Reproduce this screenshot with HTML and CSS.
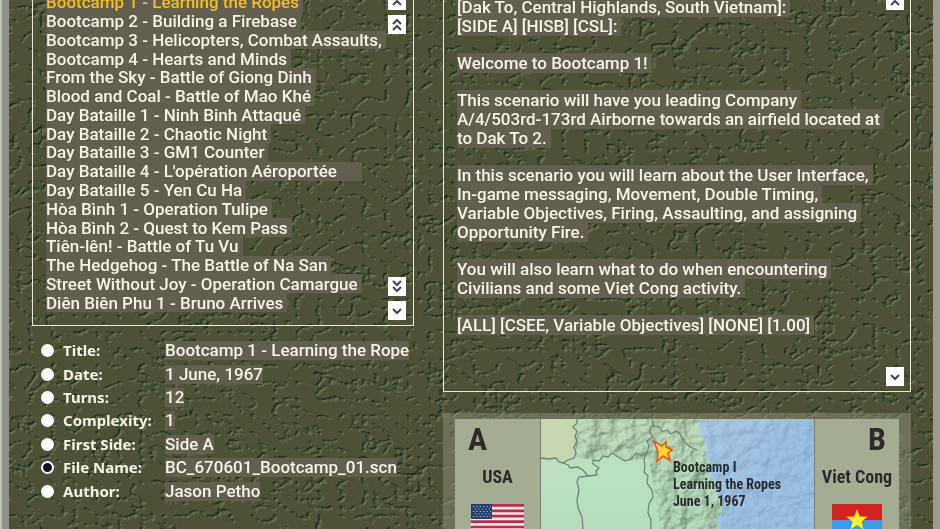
FILE: index.html
```html
<!DOCTYPE html>
<html lang="en">
<head>
  <meta charset="UTF-8">
  <meta name="viewport" content="width=device-width, initial-scale=1.0">
  <title>Scenario Selection</title>
  <link rel="stylesheet" href="styles.css">
</head>
<body>
  <div class="page">
    <svg class="leather" aria-hidden="true">
      <filter id="leather" x="0" y="0" width="100%" height="100%" color-interpolation-filters="sRGB">
        <feTurbulence type="turbulence" baseFrequency="0.045 0.06" numOctaves="5" seed="7" result="noise"/>
        <feColorMatrix in="noise" values="0 0 0 0 0  0 0 0 0 0  0 0 0 0 0  5 0 0 0 0" result="bump"/>
        <feDiffuseLighting in="bump" surfaceScale="2" lighting-color="#fff" result="light">
          <feDistantLight azimuth="225" elevation="48"/>
        </feDiffuseLighting>
        <feComponentTransfer>
          <feFuncR type="table" tableValues="0.12 0.18 0.25 0.31 0.4"/>
          <feFuncG type="table" tableValues="0.15 0.22 0.29 0.32 0.45"/>
          <feFuncB type="table" tableValues="0.12 0.16 0.2 0.22 0.33"/>
        </feComponentTransfer>
      </filter>
      <rect width="100%" height="100%" filter="url(#leather)"/>
    </svg>

    <div class="column">
      <div class="panel scenarios">
        <ul class="scenario-list">
          <li><button class="selected">Bootcamp 1 - Learning the Ropes</button></li>
          <li><button>Bootcamp 2 - Building a Firebase</button></li>
          <li><button>Bootcamp 3 - Helicopters, Combat Assaults,</button></li>
          <li><button>Bootcamp 4 - Hearts and Minds</button></li>
          <li><button>From the Sky - Battle of Giong Dinh</button></li>
          <li><button>Blood and Coal - Battle of Mao Khé</button></li>
          <li><button>Day Bataille 1 - Ninh Binh Attaqué</button></li>
          <li><button>Day Bataille 2 - Chaotic Night</button></li>
          <li><button>Day Bataille 3 - GM1 Counter</button></li>
          <li><button>Day Bataille 4 - L'opération Aéroportée&nbsp;&nbsp;&nbsp;&nbsp;&nbsp;</button></li>
          <li><button>Day Bataille 5 - Yen Cu Ha</button></li>
          <li><button>Hòa Bình 1 - Operation Tulipe</button></li>
          <li><button>Hòa Bình 2 - Quest to Kem Pass</button></li>
          <li><button>Tiên-lên! - Battle of Tu Vu</button></li>
          <li><button>The Hedgehog - The Battle of Na San</button></li>
          <li><button>Street Without Joy - Operation Camargue</button></li>
          <li><button>Diên Biên Phu 1 - Bruno Arrives</button></li>
        </ul>
        <div class="scroll">
          <div class="scroll-group">
            <button class="arrow" aria-label="Up"><svg viewBox="0 0 18 19"><path d="M5 14l4-4 4 4"/></svg></button>
            <button class="arrow" aria-label="Page up"><svg viewBox="0 0 18 19"><path d="M5 9l4-4 4 4M5 15l4-4 4 4"/></svg></button>
          </div>
          <div class="scroll-group">
            <button class="arrow" aria-label="Page down"><svg viewBox="0 0 18 19"><path d="M5 4l4 4 4-4M5 10l4 4 4-4"/></svg></button>
            <button class="arrow" aria-label="Down"><svg viewBox="0 0 18 19"><path d="M5 8l4 4 4-4"/></svg></button>
          </div>
        </div>
      </div>

      <form class="fields">
        <div class="field"><input type="radio" name="sort" id="title"><label for="title">Title:</label><span class="value">Bootcamp 1 - Learning the Rope</span></div>
        <div class="field"><input type="radio" name="sort" id="date"><label for="date">Date:</label><span class="value">1 June, 1967</span></div>
        <div class="field"><input type="radio" name="sort" id="turns"><label for="turns">Turns:</label><span class="value">12</span></div>
        <div class="field"><input type="radio" name="sort" id="complexity"><label for="complexity">Complexity:</label><span class="value">1</span></div>
        <div class="field"><input type="radio" name="sort" id="side"><label for="side">First Side:</label><span class="value">Side A</span></div>
        <div class="field"><input type="radio" name="sort" id="file" checked><label for="file">File Name:</label><span class="value">BC_670601_Bootcamp_01.scn</span></div>
        <div class="field"><input type="radio" name="sort" id="author"><label for="author">Author:</label><span class="value">Jason Petho</span></div>
      </form>
    </div>

    <div class="column">
      <div class="panel description">
        <div class="description-text">
          <p><span>[Dak To, Central Highlands, South Vietnam]:<br>[SIDE A] [HISB] [CSL]:</span></p>
          <p><span>Welcome to Bootcamp 1!</span></p>
          <p><span>This scenario will have you leading Company<br>A/4/503rd-173rd Airborne towards an airfield located at<br>to Dak To 2.</span></p>
          <p><span>In this scenario you will learn about the User Interface,<br>In-game messaging, Movement, Double Timing,<br>Variable Objectives, Firing, Assaulting, and assigning<br>Opportunity Fire.</span></p>
          <p><span>You will also learn what to do when encountering<br>Civilians and some Viet Cong activity.</span></p>
          <p><span>[ALL] [CSEE, Variable Objectives] [NONE] [1.00]</span></p>
        </div>
        <div class="scroll">
          <div class="scroll-group">
            <button class="arrow" aria-label="Up"><svg viewBox="0 0 18 19"><path d="M5 14l4-4 4 4"/></svg></button>
          </div>
          <div class="scroll-group">
            <button class="arrow" aria-label="Down"><svg viewBox="0 0 18 19"><path d="M5 8l4 4 4-4"/></svg></button>
          </div>
        </div>
      </div>

      <div class="briefing">
        <div class="side">
          <div class="letter">A</div>
          <div class="nation">USA</div>
          <svg class="flag" viewBox="0 0 53 35">
            <rect width="53" height="35" fill="#f1e9e6"/>
            <path d="M0 1.4h53M0 6.8h53M0 12.2h53M0 17.6h53M0 23h53M0 28.4h53M0 33.8h53" stroke="#bd2c48" stroke-width="2.7"/>
            <rect width="21" height="15" fill="#25406f"/>
            <path d="M2 2.5h18M2 7.5h18M2 12.5h18" stroke="#a9bdd0" stroke-width="1.2" stroke-dasharray="1.2 2.2"/>
            <path d="M4 5h16M4 10h16" stroke="#a9bdd0" stroke-width="1.2" stroke-dasharray="1.2 2.2"/>
          </svg>
        </div>
        <div class="map">
          <svg class="map-art" viewBox="0 0 273 150" preserveAspectRatio="xMidYMin slice">
            <defs>
              <linearGradient id="land" x1="0" y1="0" x2="0" y2="1">
                <stop offset="0" stop-color="#c3dcbc"/>
                <stop offset="0.4" stop-color="#badfc2"/>
                <stop offset="1" stop-color="#b3daba"/>
              </linearGradient>
              <linearGradient id="sea" x1="0" y1="0" x2="1" y2="1">
                <stop offset="0" stop-color="#abcbea"/>
                <stop offset="0.5" stop-color="#9bc3e6"/>
                <stop offset="1" stop-color="#9bc4e6"/>
              </linearGradient>
              <filter id="relief" x="0" y="0" width="100%" height="100%" color-interpolation-filters="sRGB">
                <feTurbulence type="fractalNoise" baseFrequency="0.07" numOctaves="3" seed="4"/>
                <feColorMatrix values="0 0 0 0 0  0 0 0 0 0  0 0 0 0 0  1 0 0 0 0"/>
                <feDiffuseLighting surfaceScale="5" lighting-color="#fff" result="shade">
                  <feDistantLight azimuth="225" elevation="60"/>
                </feDiffuseLighting>
                <feComposite in2="SourceGraphic" operator="in"/>
              </filter>
            </defs>
            <rect width="273" height="150" fill="url(#land)"/>
            <path d="M0 0H36L32 8 36 14 34 38 22 44 16 40 0 39z" fill="#c7d5b0"/>
            <path class="relief" d="M36 0H158L168 44 180 90 178 150H128L116 90 108 40 84 42 71 34 52 41 34 38z" opacity=".5" filter="url(#relief)"/>
            <path d="M157 0L158 8 161 18 166 28 165 36 169 44 168 54 174 64 175 74 181 84 180 94 176 102 179 112 178 150H273V0z" fill="url(#sea)"/>
            <path class="relief" d="M157 0L169 44 181 90 178 150H273V0z" opacity=".2" filter="url(#relief)"/>
            <g class="borders">
              <path d="M36 0L36 4 32 8 36 12 34 18 36 22 33 28 35 34 33 39 27 41 22 44 18 43 15 39 8 40 0 39"/>
              <path d="M22 44L27 46 29 49 36 48 42 51 47 57 38 58 36 63 38 71 36 81 37 89 41 98 42 110 42 150"/>
              <path d="M47 57L56 56 55 52 58 49 52 45 52 41 58 42 62 37 67 38 71 34 77 38 84 42 90 40 95 34 101 37 106 33 108 27 106 22 112 18 109 13 109 9 112 6 111 0"/>
              <path d="M106 33L103 40 104 48 103 53 107 57 106 64 111 71 112 78 108 85 107 94 110 101 109 150"/>
              <path d="M112 7L119 8 121 13 126 11 130 15 135 12 139 15 143 22 149 28 156 31"/>
            </g>
            <path d="M113 22L121 27 125 23 125 28 131 31 127 34 129 41 122 37 116 42 117 33z" fill="#ffd52e" stroke="#e25a1b" stroke-width="1.6"/>
          </svg>
          <div class="map-caption">Bootcamp I<br>Learning the Ropes<br>June 1, 1967</div>
        </div>
        <div class="side side-b">
          <div class="letter">B</div>
          <div class="nation">Viet Cong</div>
          <svg class="flag" viewBox="0 0 50 33">
            <rect width="50" height="16" fill="#d2231f"/>
            <rect y="16" width="50" height="17" fill="#3c9be8"/>
            <path d="M25 5l2.7 7.6 8 .2-6.3 4.9 2.2 7.8-6.6-4.5-6.6 4.5 2.2-7.8-6.3-4.9 8-.2z" fill="#fff22d"/>
          </svg>
        </div>
      </div>
    </div>
  </div>
</body>
</html>
```
FILE: styles.css
```css
* {
  box-sizing: border-box;
}
body {
  margin: 0;
  font-family: Roboto, "Liberation Sans", sans-serif;
  font-size: 17px;
  font-weight: 500;
  line-height: 19px;
  color: #f4f3e6;
  background: #4b4f3a;
  border-left: 2px solid #bfc3b7;
}
button {
  font: inherit;
  color: inherit;
  border: none;
  padding: 0;
  cursor: pointer;
}
.page {
  position: relative;
  display: grid;
  grid-template-columns: 382fr 468fr;
  gap: 29px;
  height: 100vh;
  overflow: hidden;
  padding: 0 22px 0 23px;
  border-left: 7px solid #8f9387;
  border-right: 7px solid #9d9890;
}
.leather {
  position: absolute;
  inset: 0;
  width: 100%;
  height: 100%;
  z-index: -1;
}
.column {
  min-width: 0;
}
.panel {
  display: flex;
  justify-content: space-between;
  border: 1px solid #e9e8d4;
  border-top: none;
  padding: 0 7px 5px 13px;
}
.scenario-list {
  display: grid;
  grid-auto-rows: 1fr;
  height: 319px;
  margin: -7px 0 8px;
  padding: 0;
  list-style: none;
  line-height: 18px;
}
.scenario-list li {
  display: flex;
}
.scenario-list button {
  background: #625f50;
  padding-right: 4px;
  white-space: nowrap;
}
.scenario-list .selected {
  color: #f2bd27;
}
.scroll {
  display: flex;
  flex-direction: column;
  justify-content: space-between;
  margin-top: -9px;
}
.scroll-group {
  display: grid;
  gap: 5px;
}
.arrow {
  width: 18px;
  height: 19px;
  background: #fdfdfd;
}
.arrow svg {
  display: block;
}
.arrow path {
  fill: none;
  stroke: #45434f;
  stroke-width: 2;
}

/* scenario details */
.fields {
  display: grid;
  grid-auto-rows: 1fr;
  height: 164px;
  margin: 13px 0 0 9px;
}
.field {
  display: grid;
  grid-template-columns: 22px 102px 1fr;
  align-items: center;
  justify-items: start;
}
.field input {
  appearance: none;
  width: 13px;
  height: 13px;
  margin: 0;
  border-radius: 50%;
  background: #fbfdfb;
}
.field input:checked {
  background: #101517;
  border: 2px solid #fbfdfb;
}
.field label {
  font-family: "Noto Sans", sans-serif;
  font-size: 15px;
  font-weight: 700;
}
.value {
  background: #625f50;
  white-space: nowrap;
}

.description-text {
  margin: -2px 0 33px;
}
.description-text p {
  margin: 0 0 18px;
  white-space: nowrap;
}
.description-text span {
  background: #625f50;
  padding-right: 4px;
  -webkit-box-decoration-break: clone;
  box-decoration-break: clone;
}
.description .scroll {
  margin-right: -1px;
}

/* briefing map */
.briefing {
  display: grid;
  grid-template-columns: 86px 1fr 85px;
  height: 150px;
  margin-top: 21px;
  padding: 6px 12px 0;
  background: rgba(139, 146, 122, 0.5);
  color: #2b2b2b;
}
.side {
  display: flex;
  flex-direction: column;
  align-items: center;
  background: #a5ac94;
  border-right: 1px solid #777d71;
  font-family: "Roboto Condensed", "Liberation Sans Narrow", "Liberation Sans", sans-serif;
  font-weight: 700;
}
.side-b {
  border-right: none;
  border-left: 1px solid #777d71;
}
.letter {
  align-self: flex-start;
  margin-left: 13px;
  font-size: 32px;
  line-height: 40px;
}
.side-b .letter {
  align-self: flex-end;
  margin: 0 13px 0 0;
}
.nation {
  font-size: 18px;
  line-height: 36px;
  white-space: nowrap;
}
.flag {
  width: 53px;
  margin-top: 9px;
}
.side-b .flag {
  width: 50px;
}
.map {
  position: relative;
  overflow: hidden;
}
.map-art {
  display: block;
  width: 100%;
  height: 100%;
}
.relief {
  mix-blend-mode: multiply;
}
.borders {
  fill: none;
  stroke: #71847a;
  stroke-width: 1.3;
}
.map-caption {
  position: absolute;
  left: 132px;
  top: 40px;
  font-family: "Roboto Condensed", "Liberation Sans Narrow", "Liberation Sans", sans-serif;
  font-size: 14px;
  font-weight: 700;
  line-height: 17px;
  white-space: nowrap;
}
```
